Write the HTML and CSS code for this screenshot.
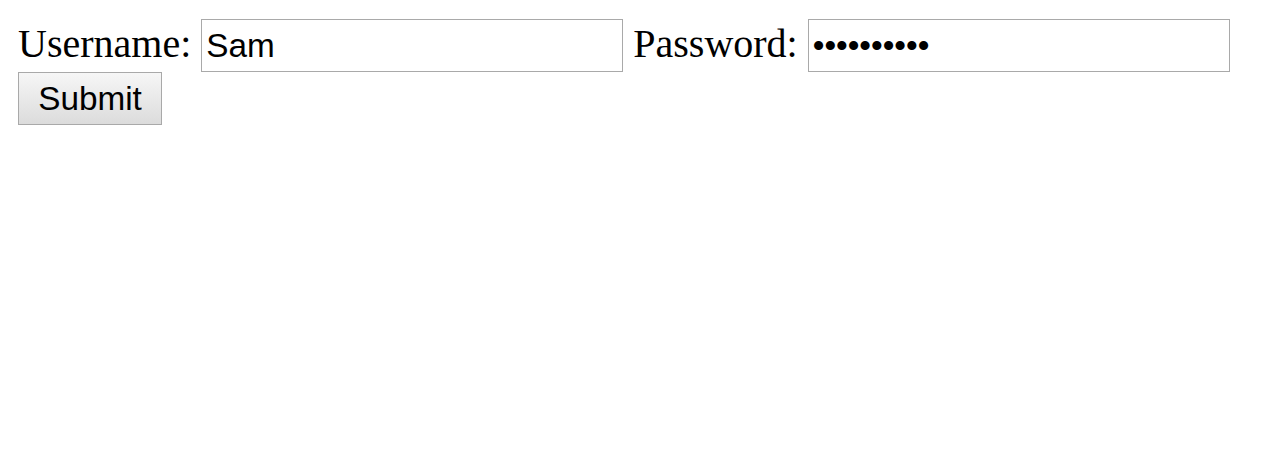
FILE: index.html
```html
<!DOCTYPE html>
<html>
<head>
<meta charset="utf-8">
<link rel="stylesheet" href="styles.css">
</head>
<body>
<form class="login">
  <label class="lbl" for="u">Username:</label>
  <input class="field" id="u" type="text" value="Sam">
  <label class="lbl" for="p">Password:</label>
  <input class="field" id="p" type="password" value="1234567890">
  <button class="btn" type="button">Submit</button>
</form>
</body>
</html>
```
FILE: styles.css
```css
html, body {
  margin: 0;
  padding: 0;
  background: #fff;
}
body {
  padding: 18px;
}
.login {
  display: flex;
  flex-wrap: wrap;
  align-items: baseline;
  column-gap: 10px;
  row-gap: 0;
  padding-top: 1px;
  margin: 0;
  width: 1244px;
}
.lbl {
  font-family: "Liberation Serif", "Times New Roman", serif;
  font-size: 40px;
  line-height: 46px;
  color: #000;
}
.field {
  box-sizing: border-box;
  width: 422px;
  height: 53px;
  margin: 0;
  padding: 2px 4px;
  border: 1px solid #a9a9a9;
  border-radius: 0;
  font-family: "Liberation Sans", Arial, sans-serif;
  font-size: 33.3px;
  color: #000;
  background: #fff;
  outline: none;
}
.btn {
  box-sizing: border-box;
  width: 144px;
  height: 53px;
  margin: 0;
  padding: 0;
  border: 1px solid #a9a9a9;
  border-radius: 0;
  background: linear-gradient(#f6f6f6, #dcdcdc);
  font-family: "Liberation Sans", Arial, sans-serif;
  font-size: 33.3px;
  color: #000;
}
```
